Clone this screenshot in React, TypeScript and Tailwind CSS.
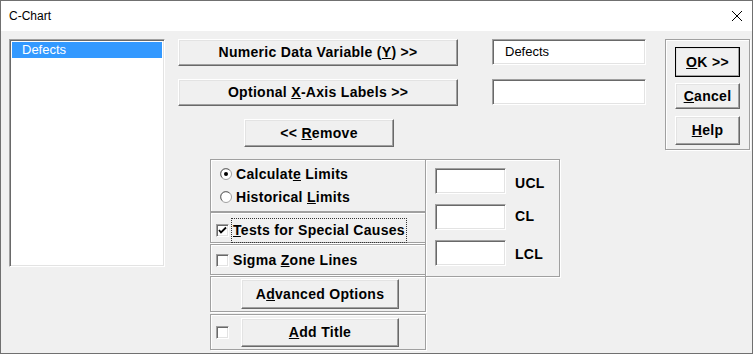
import React from "react";

const btn =
  "flex items-center justify-center bg-[#f0f0f0] border border-t-white border-l-white border-b-[#696969] border-r-[#696969] shadow-[inset_-1px_-1px_0_#a0a0a0,inset_1px_1px_0_#e3e3e3] font-bold text-[14px] tracking-[0.3px] text-black";
const sunken =
  "bg-white border border-t-[#a0a0a0] border-l-[#a0a0a0] border-b-white border-r-white shadow-[inset_1px_1px_0_#696969,inset_-1px_-1px_0_#e3e3e3]";
const etched =
  "border border-[#a0a0a0] shadow-[inset_1px_1px_0_#ffffff,1px_1px_0_#ffffff]";
const label = "text-[14px] font-bold tracking-[0.3px]";

function CheckBox({ checked }: { checked?: boolean }) {
  return (
    <div className={`w-[13px] h-[13px] shrink-0 flex items-center justify-center ${sunken}`}>
      {checked && (
        <svg width="9" height="9" viewBox="0 0 9 9">
          <path d="M1 4 L3 6.5 L8 1.5" stroke="#000" strokeWidth="1.8" fill="none" />
        </svg>
      )}
    </div>
  );
}

function Radio({ checked }: { checked?: boolean }) {
  return (
    <svg width="12" height="12" viewBox="0 0 12 12" className="shrink-0">
      <circle cx="6" cy="6" r="5.5" fill="#fff" stroke="#a0a0a0" strokeWidth="1" />
      <path d="M2.2 9.5 A5 5 0 0 1 9.5 2.2" stroke="#696969" strokeWidth="1" fill="none" />
      {checked && <circle cx="6" cy="6" r="2" fill="#000" />}
    </svg>
  );
}

export default function App() {
  return (
    <div className="w-[753px] h-[354px] border border-[#707070] flex flex-col bg-[#f0f0f0] font-['Liberation_Sans',Arial,sans-serif] text-black overflow-hidden">
      <div className="h-[30px] shrink-0 bg-white flex items-center justify-between pl-[8px] pr-[10px]">
        <span className="text-[12px]">C-Chart</span>
        <svg width="10" height="10" viewBox="0 0 10 10">
          <path d="M0 0 L10 10 M10 0 L0 10" stroke="#000" strokeWidth="1" />
        </svg>
      </div>
      <div className="flex-1 flex pt-[8px] pl-[8px]">
        {/* list box */}
        <div className={`w-[156px] h-[228px] p-[2px] ${sunken}`}>
          <div className="h-[16px] bg-[#3399ff] text-white text-[13px] leading-[16px] pl-[10px]">Defects</div>
        </div>

        {/* middle column */}
        <div className="ml-[13px] w-[468px] flex flex-col">
          <div className="flex">
            <button className={`${btn} w-[280px] h-[27px]`}>
              <span>
                Numeric Data Variable (<u>Y</u>) &gt;&gt;
              </span>
            </button>
            <div className={`${sunken} ml-[34px] w-[154px] h-[26px] text-[13px] pl-[12px] flex items-center`}>Defects</div>
          </div>
          <div className="flex mt-[13px]">
            <button className={`${btn} w-[280px] h-[27px]`}>
              <span>
                Optional <u>X</u>-Axis Labels &gt;&gt;
              </span>
            </button>
            <div className={`${sunken} ml-[34px] w-[154px] h-[26px]`} />
          </div>
          <button className={`${btn} ml-[66px] mt-[13px] w-[150px] h-[28px]`}>
            <span>
              &lt;&lt; <u>R</u>emove
            </span>
          </button>

          {/* lower panel */}
          <div className="ml-[32px] mt-[12px] flex items-start">
            <div className="w-[216px] flex flex-col">
              <div className={`${etched} h-[53px] flex flex-col justify-center gap-[7px] pl-[9px] ${label}`}>
                <div className="flex items-center gap-[4px] h-[16px]">
                  <Radio checked />
                  <span>
                    Calculat<u>e</u> Limits
                  </span>
                </div>
                <div className="flex items-center gap-[4px] h-[16px]">
                  <Radio />
                  <span>
                    Historical <u>L</u>imits
                  </span>
                </div>
              </div>
              <div className={`${etched} h-[31px] flex items-center pl-[5px] pt-[5px] ${label}`}>
                <CheckBox checked />
                <span className="ml-[2px] px-[1px] py-[1px] border border-dotted border-[#333]">
                  <u>T</u>ests for Special Causes
                </span>
              </div>
              <div className={`${etched} mt-[1px] h-[31px] flex items-center pl-[5px] pt-[1px] ${label}`}>
                <CheckBox />
                <span className="ml-[4px]">
                  Sigma <u>Z</u>one Lines
                </span>
              </div>
              <div className={`${etched} mt-[1px] h-[36px] flex items-center pl-[30px]`}>
                <button className={`${btn} w-[158px] h-[30px]`}>
                  <span>
                    A<u>d</u>vanced Options
                  </span>
                </button>
              </div>
              <div className={`${etched} mt-[2px] h-[36px] flex items-center pl-[5px]`}>
                <CheckBox />
                <button className={`${btn} ml-[12px] w-[158px] h-[29px]`}>
                  <span>
                    <u>A</u>dd Title
                  </span>
                </button>
              </div>
            </div>
            <div className={`${etched} -ml-px w-[135px] h-[118px] flex flex-col pl-[9px] pt-[8px] gap-[10px]`}>
              {["UCL", "CL", "LCL"].map((l) => (
                <div key={l} className="flex items-start">
                  <div className={`${sunken} w-[71px] h-[26px]`} />
                  <span className={`ml-[9px] ${label} ${l === "LCL" ? "mt-[4px]" : l === "CL" ? "mt-[2px]" : "mt-[5px]"}`}>{l}</span>
                </div>
              ))}
            </div>
          </div>
        </div>

        {/* right buttons */}
        <div className={`${etched} ml-[19px] w-[85px] h-[111px] flex flex-col pl-[9px] pt-[7px]`}>
          <button className={`${btn} w-[65px] h-[30px] outline outline-1 outline-black -outline-offset-1`}>
            <span>
              <u>O</u>K &gt;&gt;
            </span>
          </button>
          <button className={`${btn} mt-[6px] w-[65px] h-[26px]`}>
            <span>
              <u>C</u>ancel
            </span>
          </button>
          <button className={`${btn} mt-[7px] w-[65px] h-[29px]`}>
            <span>
              <u>H</u>elp
            </span>
          </button>
        </div>
      </div>
    </div>
  );
}
